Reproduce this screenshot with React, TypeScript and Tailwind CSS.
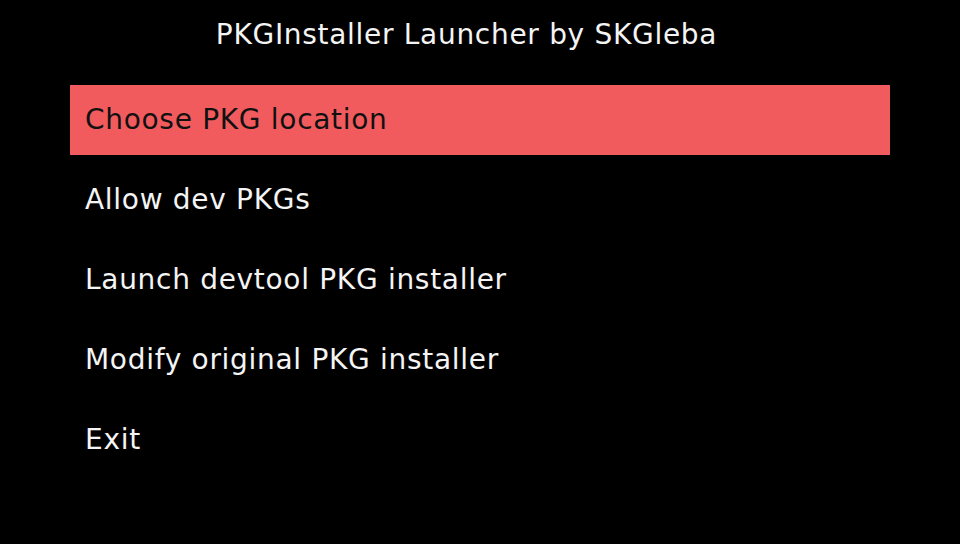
import React from "react";

const items = [
  "Choose PKG location",
  "Allow dev PKGs",
  "Launch devtool PKG installer",
  "Modify original PKG installer",
  "Exit",
];

export default function App() {
  return (
    <div
      className="w-[960px] h-[544px] bg-black overflow-hidden pt-[21px]"
      style={{ fontFamily: '"DejaVu Sans", "Liberation Sans", sans-serif' }}
    >
      <div className="h-[28px] leading-[28px] text-[28px] tracking-[0.7px] text-[#f4f4f4] text-center pr-[27px]">
        PKGInstaller Launcher by SKGleba
      </div>
      <div className="mt-[36px] flex flex-col gap-[10px] px-[70px]">
        {items.map((t, i) => (
          <div
            key={t}
            className={
              i === 0
                ? "h-[70px] flex items-center pl-[15px] bg-[#f25b5d] text-[#111111] text-[28px] tracking-[0.7px]"
                : "h-[70px] flex items-center pl-[15px] text-[#f4f4f4] text-[28px] tracking-[0.7px]"
            }
          >
            {t}
          </div>
        ))}
      </div>
    </div>
  );
}
